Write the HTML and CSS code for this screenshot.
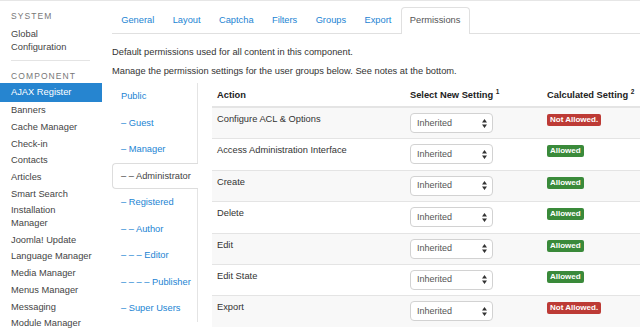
FILE: index.html
```html
<!doctype html>
<html lang="en">
    <head>
        <title>Options: AJAX Register</title>
        <meta name="viewport" content="width=device-width, initial-scale=1"/>
        <link rel="stylesheet" href="styles.css">
    </head>
    <body>
        <div class="page">
            <div class="sidebar">
                <h4 class="nav-header">System</h4>
                <ul class="side-list">
                    <li><a href="#">Global Configuration</a></li>
                </ul>
                <hr class="divider">
                <h4 class="nav-header">Component</h4>
                <ul class="side-list">
                    <li class="active"><a href="#">AJAX Register</a></li>
                    <li><a href="#">Banners</a></li>
                    <li><a href="#">Cache Manager</a></li>
                    <li><a href="#">Check-in</a></li>
                    <li><a href="#">Contacts</a></li>
                    <li><a href="#">Articles</a></li>
                    <li><a href="#">Smart Search</a></li>
                    <li><a href="#">Installation Manager</a></li>
                    <li><a href="#">Joomla! Update</a></li>
                    <li><a href="#">Language Manager</a></li>
                    <li><a href="#">Media Manager</a></li>
                    <li><a href="#">Menus Manager</a></li>
                    <li><a href="#">Messaging</a></li>
                    <li><a href="#">Module Manager</a></li>
                </ul>
            </div>
            <div class="content">
                <ul class="tabs">
                    <li><a href="#">General</a></li>
                    <li><a href="#">Layout</a></li>
                    <li><a href="#">Captcha</a></li>
                    <li><a href="#">Filters</a></li>
                    <li><a href="#">Groups</a></li>
                    <li><a href="#">Export</a></li>
                    <li class="active"><a href="#">Permissions</a></li>
                </ul>
                <p class="note">Default permissions used for all content in this component.</p>
                <p class="note">Manage the permission settings for the user groups below. See notes at the bottom.</p>
                <div class="perms">
                    <ul class="groups">
                        <li><a href="#">Public</a></li>
                        <li><a href="#">&ndash; Guest</a></li>
                        <li><a href="#">&ndash; Manager</a></li>
                        <li class="active"><a href="#">&ndash; &ndash; Administrator</a></li>
                        <li><a href="#">&ndash; Registered</a></li>
                        <li><a href="#">&ndash; &ndash; Author</a></li>
                        <li><a href="#">&ndash; &ndash; &ndash; Editor</a></li>
                        <li><a href="#">&ndash; &ndash; &ndash; &ndash; Publisher</a></li>
                        <li><a href="#">&ndash; Super Users</a></li>
                    </ul>
                    <table class="rules">
                        <thead>
                            <tr>
                                <th class="col-action">Action</th>
                                <th class="col-select">Select New Setting <sup>1</sup></th>
                                <th>Calculated Setting <sup>2</sup></th>
                            </tr>
                        </thead>
                        <tbody>
                            <tr>
                                <td>Configure ACL &amp; Options</td>
                                <td><div class="select">Inherited <svg width="5" height="9" viewBox="0 0 5 9"><path d="M0 3.5 2.5 0 5 3.5Z M0 5.5 2.5 9 5 5.5Z" fill="#333"/></svg></div></td>
                                <td><span class="badge badge-no">Not Allowed.</span></td>
                            </tr>
                            <tr>
                                <td>Access Administration Interface</td>
                                <td><div class="select">Inherited <svg width="5" height="9" viewBox="0 0 5 9"><path d="M0 3.5 2.5 0 5 3.5Z M0 5.5 2.5 9 5 5.5Z" fill="#333"/></svg></div></td>
                                <td><span class="badge badge-yes">Allowed</span></td>
                            </tr>
                            <tr>
                                <td>Create</td>
                                <td><div class="select">Inherited <svg width="5" height="9" viewBox="0 0 5 9"><path d="M0 3.5 2.5 0 5 3.5Z M0 5.5 2.5 9 5 5.5Z" fill="#333"/></svg></div></td>
                                <td><span class="badge badge-yes">Allowed</span></td>
                            </tr>
                            <tr>
                                <td>Delete</td>
                                <td><div class="select">Inherited <svg width="5" height="9" viewBox="0 0 5 9"><path d="M0 3.5 2.5 0 5 3.5Z M0 5.5 2.5 9 5 5.5Z" fill="#333"/></svg></div></td>
                                <td><span class="badge badge-yes">Allowed</span></td>
                            </tr>
                            <tr>
                                <td>Edit</td>
                                <td><div class="select">Inherited <svg width="5" height="9" viewBox="0 0 5 9"><path d="M0 3.5 2.5 0 5 3.5Z M0 5.5 2.5 9 5 5.5Z" fill="#333"/></svg></div></td>
                                <td><span class="badge badge-yes">Allowed</span></td>
                            </tr>
                            <tr>
                                <td>Edit State</td>
                                <td><div class="select">Inherited <svg width="5" height="9" viewBox="0 0 5 9"><path d="M0 3.5 2.5 0 5 3.5Z M0 5.5 2.5 9 5 5.5Z" fill="#333"/></svg></div></td>
                                <td><span class="badge badge-yes">Allowed</span></td>
                            </tr>
                            <tr>
                                <td>Export</td>
                                <td><div class="select">Inherited <svg width="5" height="9" viewBox="0 0 5 9"><path d="M0 3.5 2.5 0 5 3.5Z M0 5.5 2.5 9 5 5.5Z" fill="#333"/></svg></div></td>
                                <td><span class="badge badge-no">Not Allowed.</span></td>
                            </tr>
                        </tbody>
                    </table>
                </div>
            </div>
        </div>
    </body>
</html>
```

FILE: styles.css
```css
body {
    margin: 0;
    border-top: 1px solid #e6e6e6;
    font-family: "Liberation Sans", Arial, sans-serif;
    font-size: 9.3px;
    color: #333;
    overflow: hidden;
}
a {
    text-decoration: none;
}
ul {
    list-style: none;
    margin: 0;
    padding: 0;
}
.page {
    display: flex;
}
.sidebar {
    width: 102px;
    flex: none;
    padding-top: 9px;
}
.nav-header {
    margin: 0 0 4px;
    padding: 0 11px;
    font-size: 8.5px;
    font-weight: normal;
    letter-spacing: 1.1px;
    text-transform: uppercase;
    color: #777;
    line-height: 12px;
}
.divider + .nav-header {
    margin-bottom: 1px;
}
.side-list a {
    display: block;
    padding: 2px 9px 2px 11px;
    line-height: 12.7px;
    color: #444;
}
.side-list li.active a {
    background-color: #2685d0;
    color: #fff;
    padding-top: 3px;
    padding-bottom: 3px;
}
.divider {
    margin: 5px 12px 9px 11px;
    border: 0;
    border-top: 1px solid #e4e4e4;
}
.content {
    flex: 1;
    padding-left: 10px;
    padding-top: 6px;
}
.tabs {
    display: flex;
    border-bottom: 1px solid #e0e0e0;
}
.tabs a {
    display: block;
    padding: 0 8.2px;
    line-height: 25px;
    color: #2384d3;
    border: 1px solid transparent;
    border-bottom: 0;
    border-radius: 4px 4px 0 0;
    margin-bottom: -1px;
}
.tabs li.active a {
    color: #555;
    background: #fff;
    border-color: #e0e0e0;
    padding-bottom: 1px;
}
.note {
    margin: 14px 0 0;
    line-height: 8px;
}
.note + .note {
    margin-top: 11px;
}
.perms {
    display: flex;
    margin-top: 8px;
    gap: 14px;
}
.groups {
    width: 86px;
    flex: none;
}
.groups li {
    border-right: 1px solid #e4e4e4;
}
.groups a {
    display: block;
    padding: 0 0 0 8px;
    line-height: 24.5px;
    white-space: nowrap;
    color: #2384d3;
    border: 1px solid transparent;
    border-right: 0;
}
.groups li.active {
    border-right-color: transparent;
}
.groups li.active a {
    color: #444;
    border-color: #ddd;
    border-radius: 4px 0 0 4px;
    background: #fff;
    margin-right: -1px;
}
.rules {
    flex: 1;
    border-collapse: collapse;
    align-self: flex-start;
}
.rules th {
    text-align: left;
    font-weight: bold;
    color: #222;
    padding: 6px 5px 4px;
    line-height: 13px;
    white-space: nowrap;
    border-bottom: 2px solid #e4e4e4;
}
.rules sup {
    font-size: 6.5px;
    vertical-align: 4px;
    line-height: 0;
}
.rules .col-action {
    width: 183px;
}
.rules .col-select {
    width: 127px;
}
.rules td {
    vertical-align: top;
    padding: 5px 5px 5.4px;
    border-top: 1px solid #e4e4e4;
    line-height: 13px;
}
.rules tbody tr:nth-child(odd) td {
    background-color: #f8f8f8;
}
.rules tbody tr:first-child td {
    border-top: 0;
}
.select {
    width: 83px;
    height: 20px;
    box-sizing: border-box;
    border: 1px solid #d2d2d2;
    border-radius: 4px;
    background: #fff;
    display: flex;
    align-items: center;
    justify-content: space-between;
    padding: 0 5px 0 6px;
    color: #555;
    font-size: 9px;
}
.badge {
    display: inline-block;
    color: #fff;
    font-weight: bold;
    font-size: 8px;
    line-height: 12px;
    padding: 0 3px;
    border-radius: 2px;
}
.badge-no {
    background-color: #bd3b36;
}
.badge-yes {
    background-color: #3a8a3a;
}
```
